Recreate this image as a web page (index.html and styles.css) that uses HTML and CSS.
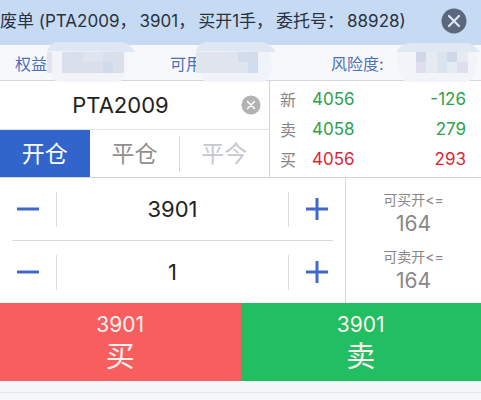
FILE: index.html
```
<!DOCTYPE html>
<html lang="zh-CN">
<head>
    <meta charset="UTF-8">
    <meta name="viewport" content="width=device-width, initial-scale=1.0">
    <title>下单</title>
    <link rel="stylesheet" href="styles.css">
</head>
<body>
    <div class="notice">
        <div class="notice-text"><span>废单 (PTA2009，</span><span>3901，</span><span>买开1手，</span><span>委托号：</span><span>88928)</span></div>
        <button class="notice-close" type="button" aria-label="关闭">
            <svg width="26" height="26" viewBox="0 0 26 26"><circle cx="13" cy="13" r="12.5" fill="#5b677c"/><path d="M8 8l10 10M18 8L8 18" stroke="#dce6f5" stroke-width="2.2" stroke-linecap="round"/></svg>
        </button>
    </div>

    <div class="account">
        <div class="account-item">
            <span>权益</span>
            <svg class="mosaic" width="88" height="42" viewBox="0 0 88 42">
                <path d="M0 9Q3 0 14 0H72Q83 1 88 10H78Q84 20 79 31Q77 40 68 40H14Q5 40 4 31Q-1 22 0 9Z" fill="#f2f4fa"/>
                <path d="M0 9Q3 0 14 0H72Q83 1 88 10Z" fill="#dfe7f4"/>
                <path d="M0 10h5v21H0z" fill="#dfe4ef"/>
                <path d="M15 10h62v21H15z" fill="#d9e0ec"/><path d="M36 10h20v10H36z" fill="#dfe4ef"/><path d="M56 20h10v11H56z" fill="#d2dbeb"/>
            </svg>
        </div>
        <div class="account-item">
            <span>可用</span>
            <svg class="mosaic" width="88" height="42" viewBox="0 0 88 42">
                <path d="M0 9Q3 0 14 0H64Q74 1 80 10H74Q77 20 75 31Q73 40 64 40H14Q5 40 4 31Q-1 22 0 9Z" fill="#f0f3f9"/>
                <path d="M0 9Q3 0 14 0H64Q74 1 80 10Z" fill="#dfe7f4"/>
                <path d="M0 10h62v21H0z" fill="#e0e5ef"/><path d="M42 10h20v10H42z" fill="#d3dcea"/><path d="M52 20h10v11H52z" fill="#d0dcef"/>
            </svg>
        </div>
        <div class="account-item">
            <span>风险度:</span>
            <svg class="mosaic" width="88" height="42" viewBox="0 0 88 42">
                <path d="M0 10Q5 2 14 1H68Q78 1 84 10H78Q84 20 79 31Q77 40 68 40H14Q5 40 4 31Q2 22 0 10Z" fill="#f2f4fa"/>
                <path d="M0 10Q5 2 14 1H68Q78 1 84 10Z" fill="#e0e8f4"/>
                <path d="M20 10h52v21H20z" fill="#e6eaf3"/><path d="M20 10h10v10H20zM51 10h10v10H51z" fill="#d0d7e8"/><path d="M20 20h10v11H20zM61 20h11v11H61z" fill="#dfdeee"/><path d="M41 10h10v21H41z" fill="#dbe3ef"/>
            </svg>
        </div>
    </div>

    <div class="market">
        <div class="contract">
            <div class="contract-search">
                <input class="contract-input" type="text" value="PTA2009" aria-label="合约">
                <button class="contract-clear" type="button" aria-label="清除">
                    <svg width="20" height="20" viewBox="0 0 20 20"><circle cx="10" cy="10" r="9.5" fill="#b3b3b3"/><path d="M6.5 6.5l7 7M13.5 6.5l-7 7" stroke="#fff" stroke-width="1.5" stroke-linecap="round"/></svg>
                </button>
            </div>
            <div class="tabs">
                <button class="tab active" type="button">开仓</button>
                <button class="tab" type="button">平仓</button>
                <button class="tab disabled" type="button" disabled>平今</button>
            </div>
        </div>
        <div class="quotes-box">
            <table class="quotes">
                <tr class="down"><th>新</th><td>4056</td><td>-126</td></tr>
                <tr class="down"><th>卖</th><td>4058</td><td>279</td></tr>
                <tr class="up"><th>买</th><td>4056</td><td>293</td></tr>
            </table>
        </div>
    </div>

    <div class="order">
        <div class="steppers">
            <div class="stepper">
                <button class="step" type="button" aria-label="减价"><svg width="24" height="24" viewBox="0 0 24 24"><path d="M1 12h22" stroke="#3f68c8" stroke-width="3"/></svg></button>
                <input class="step-input" type="text" value="3901" aria-label="价格">
                <button class="step" type="button" aria-label="加价"><svg width="24" height="24" viewBox="0 0 24 24"><path d="M1 12h22M12 1v22" stroke="#3f68c8" stroke-width="3"/></svg></button>
            </div>
            <div class="stepper">
                <button class="step" type="button" aria-label="减少手数"><svg width="24" height="24" viewBox="0 0 24 24"><path d="M1 12h22" stroke="#3f68c8" stroke-width="3"/></svg></button>
                <input class="step-input" type="text" value="1" aria-label="手数">
                <button class="step" type="button" aria-label="增加手数"><svg width="24" height="24" viewBox="0 0 24 24"><path d="M1 12h22M12 1v22" stroke="#3f68c8" stroke-width="3"/></svg></button>
            </div>
        </div>
        <div class="limits">
            <div class="limit"><span class="limit-label">可买开&lt;=</span><span class="limit-value">164</span></div>
            <div class="limit"><span class="limit-label">可卖开&lt;=</span><span class="limit-value">164</span></div>
        </div>
    </div>

    <div class="trade">
        <button class="trade-button buy" type="button"><span class="trade-price">3901</span><span class="trade-name">买</span></button>
        <button class="trade-button sell" type="button"><span class="trade-price">3901</span><span class="trade-name">卖</span></button>
    </div>
    <div class="bottom"></div>
</body>
</html>
```
FILE: styles.css
```
* {
    box-sizing: border-box;
}

body {
    margin: 0;
    font-family: Inter, "Noto Sans CJK SC", sans-serif;
    background-color: #f6f7fb;
    color: #222;
}

button,
input {
    font-family: inherit;
    margin: 0;
    padding: 0;
    border: none;
    background: none;
}

button {
    cursor: pointer;
}

svg {
    display: block;
    fill: none;
}

.notice {
    display: flex;
    justify-content: space-between;
    align-items: center;
    height: 45px;
    padding: 0 14px 4px 0;
    background-color: #c7daf3;
}

.notice-text {
    display: flex;
    align-items: baseline;
    gap: 3px;
    padding-bottom: 2px;
    font-size: 17px;
    white-space: nowrap;
    color: #283241;
}

/* 资金 */
.account {
    display: grid;
    grid-template-columns: 155fr 161fr 150fr;
    height: 36px;
    padding-left: 15px;
    border-bottom: 1px solid #d5d6dc;
    background-color: #f7f8fc;
}

.account-item {
    position: relative;
    display: flex;
    align-items: center;
    font-size: 16px;
    color: #4c70b8;
}

/* 遮住金额 */
.mosaic {
    position: absolute;
    top: -3px;
    left: 32px;
}

.account-item:nth-child(2) .mosaic {
    left: 26px;
}

.account-item:last-child .mosaic {
    left: auto;
    right: -3px;
}

/* 合约和行情 */
.market {
    display: grid;
    grid-template-columns: minmax(0, 270fr) minmax(0, 211fr);
    border-bottom: 1px solid #d2d3d8;
    background-color: white;
}

.contract {
    border-right: 1px solid #d2d3d8;
}

.contract-search {
    display: flex;
    align-items: center;
    height: 49px;
    padding-right: 8px;
    border-bottom: 1px solid #e2e3e7;
}

.contract-input {
    flex: 1;
    min-width: 0;
    font-size: 22px;
    text-align: center;
    color: #222;
}

.tabs {
    display: flex;
}

.tab {
    flex: 1;
    height: 47px;
    padding-bottom: 3px;
    font-size: 23px;
    color: #8f8f8f;
}

.tab.active {
    background-color: #3265cc;
    color: white;
}

.tab.disabled {
    color: #c5c8ce;
    background: linear-gradient(#d5d7dc, #d5d7dc) left center / 1px 36px no-repeat;
}

.quotes-box {
    padding: 3px 15px 3px 10px;
}

.quotes {
    width: 100%;
    height: 100%;
    border-collapse: collapse;
    font-size: 17px;
}

.quotes th {
    width: 32px;
    padding: 0;
    font-size: 16px;
    font-weight: normal;
    text-align: left;
    color: #858585;
}

.quotes td {
    padding: 0;
}

.quotes td:last-child {
    text-align: right;
}

.down {
    color: #2fa04c;
}

.up {
    color: #dc2635;
}

/* 价格和手数 */
.order {
    display: grid;
    grid-template-columns: minmax(0, 345fr) minmax(0, 136fr);
    height: 125px;
    background-color: white;
}

.steppers {
    display: flex;
    flex-direction: column;
    padding: 0 12px;
}

.stepper {
    flex: 1;
    display: flex;
    align-items: center;
}

.stepper + .stepper {
    border-top: 1px solid #d8d9dd;
}

.step {
    width: 44px;
    padding-left: 4px;
}

.step:last-child {
    padding-left: 16px;
}

.step-input {
    flex: 1;
    min-width: 0;
    height: 35px;
    border-left: 1px solid #dcdde0;
    border-right: 1px solid #dcdde0;
    font-size: 22px;
    text-align: center;
    color: #222;
}

.limits {
    display: flex;
    flex-direction: column;
    justify-content: center;
    gap: 9px;
    border-left: 1px solid #d8d9dd;
    color: #888;
}

.limit {
    display: flex;
    flex-direction: column;
    align-items: center;
}

.limit-label {
    font-size: 14px;
    line-height: 24px;
}

.limit-value {
    font-size: 21px;
    line-height: 24px;
}

/* 下单按钮 */
.trade {
    display: flex;
}

.trade-button {
    flex: 1;
    display: flex;
    flex-direction: column;
    align-items: center;
    height: 78px;
    padding-top: 10px;
    color: #fff0ee;
}

.buy {
    background-color: #f95e5e;
}

.sell {
    background-color: #21be62;
}

.trade-price {
    font-size: 21px;
    line-height: 24px;
}

.trade-name {
    font-size: 29px;
    line-height: 40px;
}

.bottom {
    height: 12px;
    border-bottom: 1px solid #e6e8ed;
}
```
